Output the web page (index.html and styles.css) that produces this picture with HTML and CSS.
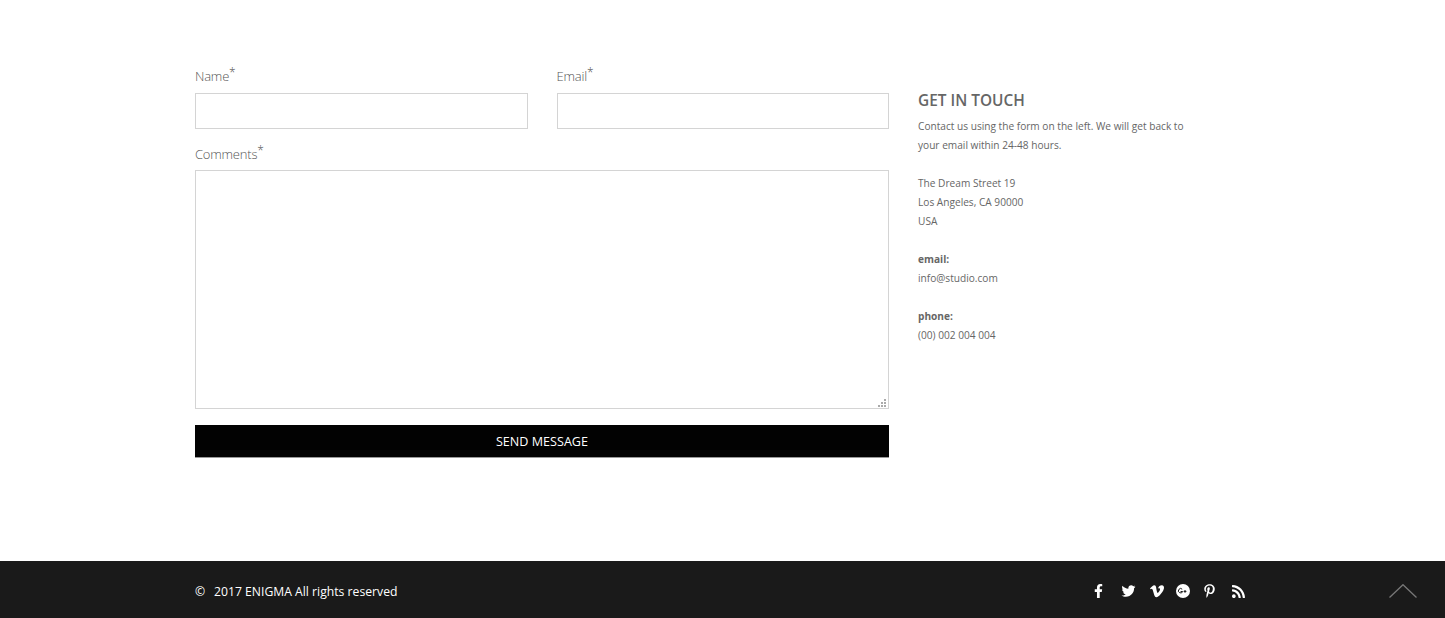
FILE: index.html
```html
<!DOCTYPE html>
<html lang="en">
<head>
<meta charset="utf-8">
<title>Contact</title>
<link rel="stylesheet" href="styles.css">
</head>
<body>
<main class="main">
  <form class="form">
    <div class="row">
      <div class="field">
        <label class="label" for="name">Name<sup class="req">*</sup></label>
        <input class="input" id="name" type="text">
      </div>
      <div class="field">
        <label class="label" for="email">Email<sup class="req">*</sup></label>
        <input class="input" id="email" type="text">
      </div>
    </div>
    <div class="field">
      <label class="label label-comments" for="comments">Comments<sup class="req">*</sup></label>
      <textarea class="textarea" id="comments"></textarea>
    </div>
    <button class="send" type="button">SEND MESSAGE</button>
  </form>
  <aside class="info">
    <h2 class="info-title">GET IN TOUCH</h2>
    <p class="info-text">Contact us using the form on the left. We will get back to<br>your email within 24-48 hours.</p>
    <p class="info-text">The Dream Street 19<br>Los Angeles, CA 90000<br>USA</p>
    <p class="info-text"><strong>email:</strong><br>info@studio.com</p>
    <p class="info-text"><strong>phone:</strong><br>(00) 002 004 004</p>
  </aside>
</main>
<footer class="footer">
  <div class="footer-inner">
    <p class="copy"><span class="copy-mark">©</span>2017 ENIGMA All rights reserved</p>
    <div class="social">
      <svg class="ic ic-f" viewBox="0 0 320 512"><path d="M279.14 288l14.22-92.66h-88.91v-60.13c0-25.35 12.42-50.06 52.24-50.06h40.42V6.26S260.43 0 225.36 0c-73.22 0-121.08 44.38-121.08 124.72v70.62H22.89V288h81.39v224h100.17V288z"/></svg>
      <svg class="ic ic-t" viewBox="0 0 512 512"><path d="M459.37 151.716c.325 4.548.325 9.097.325 13.645 0 138.72-105.583 298.558-298.558 298.558-59.452 0-114.68-17.219-161.137-47.106 8.447.974 16.568 1.299 25.34 1.299 49.055 0 94.213-16.568 130.274-44.832-46.132-.975-84.792-31.188-98.112-72.772 6.498.974 12.995 1.624 19.818 1.624 9.421 0 18.843-1.3 27.614-3.573-48.081-9.747-84.143-51.98-84.143-102.985v-1.299c13.969 7.797 30.214 12.67 47.431 13.319-28.264-18.843-46.781-51.005-46.781-87.391 0-19.492 5.197-37.36 14.294-52.954 51.655 63.675 129.3 105.258 216.365 109.807-1.624-7.797-2.599-15.918-2.599-24.04 0-57.828 46.782-104.934 104.934-104.934 30.213 0 57.502 12.67 76.67 33.137 23.715-4.548 46.456-13.32 66.599-25.34-7.798 24.366-24.366 44.833-46.132 57.827 21.117-2.273 41.584-8.122 60.426-16.243-14.292 20.791-32.161 39.308-52.628 54.253z"/></svg>
      <svg class="ic ic-v" viewBox="0 40 448 420"><path d="M447.8 153.6c-2 43.6-32.4 103.3-91.4 179.1-60.9 79.2-112.4 118.8-154.6 118.8-26.1 0-48.2-24.1-66.3-72.3C100.3 250 85.3 174.3 56.2 174.3c-3.4 0-15.1 7.1-35.2 21.1L0 168.2c51.6-45.3 100.9-95.7 131.8-98.5 34.9-3.4 56.3 20.5 64.4 71.5 28.7 181.5 41.4 208.9 93.6 126.7 18.7-29.6 28.8-52.1 30.2-67.6 4.8-45.9-35.8-42.8-63.3-31 22-72.1 64.1-107.1 126.2-105.1 45.8 1.2 67.5 31.1 64.9 89.4z"/></svg>
      <svg class="ic ic-g" viewBox="0 0 14 14"><circle cx="7" cy="7" r="7"/><path class="g-mark" d="M6.2 5.2A2.2 2.2 0 1 0 6.700 7.500H4.600M9 6v2.800M7.700 7.400h2.700"/></svg>
      <svg class="ic ic-p" viewBox="0 0 384 512"><path d="M204 6.5C101.4 6.5 0 74.9 0 185.6 0 256 39.6 296 63.6 296c9.9 0 15.6-27.6 15.6-35.4 0-9.3-23.7-29.1-23.7-67.8 0-80.4 61.2-137.4 140.4-137.4 68.1 0 118.5 38.7 118.5 109.8 0 53.1-21.3 152.7-90.3 152.7-24.9 0-46.2-18-46.2-43.8 0-37.8 26.4-74.4 26.4-113.4 0-66.2-93.9-54.2-93.9 25.8 0 16.8 2.1 35.4 9.6 50.7-13.8 59.4-42 147.9-42 209.1 0 18.9 2.7 37.5 4.5 56.4 3.4 3.8 1.7 3.4 6.9 1.5 50.4-69 48.6-82.5 71.4-172.8 12.3 23.4 44.1 36 69.3 36 106.2 0 153.9-103.5 153.9-196.8C384 71.3 298.2 6.5 204 6.5z"/></svg>
      <svg class="ic ic-r" viewBox="0 32 448 448"><path d="M128.081 415.959c0 35.369-28.672 64.041-64.041 64.041S0 451.328 0 415.959s28.672-64.041 64.041-64.041 64.04 28.673 64.04 64.041zm175.66 47.25c-8.354-154.6-132.185-278.587-286.95-286.95C7.656 175.765 0 183.105 0 192.253v48.069c0 8.415 6.49 15.472 14.887 16.018 111.832 7.284 201.473 96.702 208.772 208.772.547 8.397 7.604 14.887 16.018 14.887h48.069c9.149.001 16.489-7.655 15.995-16.79zm144.249.288C439.596 229.677 251.465 40.445 16.503 32.01 7.473 31.686 0 38.981 0 48.016v48.068c0 8.625 6.835 15.645 15.453 15.999 191.179 7.839 344.627 161.316 352.465 352.465.353 8.618 7.373 15.453 15.999 15.453h48.068c9.034-.001 16.329-7.474 16.005-16.504z"/></svg>
    </div>
  </div>
  <svg class="to-top" viewBox="0 0 28 14"><path d="M.5 13.500L14 .7l13.500 12.800"/></svg>
</footer>
</body>
</html>
```
FILE: styles.css
```css
* { box-sizing: border-box; }
html, body { margin: 0; padding: 0; }
body {
  background: #fff;
  font-family: "Open Sans", sans-serif;
  color: #666;
}
.main {
  display: flex;
  gap: 29px;
  height: 561px;
  padding: 65px 0 0 195px;
}
.form {
  width: 694px;
  flex: none;
  display: flex;
  flex-direction: column;
}
.row { display: flex; gap: 29px; }
.row .field { flex: 1; min-width: 0; }
.field { display: flex; flex-direction: column; }
.label {
  font-size: 13px;
  letter-spacing: -0.2px;
  font-weight: 300;
  line-height: 23px;
  height: 28px;
  color: #555;
}
.label-comments { padding-top: 1px; }
.req {
  font-size: 12px;
  line-height: 0;
  vertical-align: 4px;
}
.input {
  height: 36px;
  width: 100%;
  border: 1px solid #d4d4d4;
  background: #fff;
  margin-bottom: 13px;
  padding: 0 8px;
}
.textarea {
  display: block;
  width: 100%;
  height: 239px;
  border: 1px solid #d4d4d4;
  background: #fff;
  margin: 0 0 16px;
  padding: 8px;
}
.textarea::-webkit-resizer {
  background-color: #fff;
  background-image:
    linear-gradient(#aaa, #aaa), linear-gradient(#aaa, #aaa), linear-gradient(#aaa, #aaa),
    linear-gradient(#aaa, #aaa), linear-gradient(#aaa, #aaa), linear-gradient(#aaa, #aaa);
  background-size: 2px 2px;
  background-repeat: no-repeat;
  background-position: 11px 6px, 11px 9px, 8px 9px, 11px 12px, 8px 12px, 5px 12px;
}
.send {
  display: block;
  width: 100%;
  height: 33px;
  border: 0;
  border-bottom: 1px solid #999;
  background: #020202;
  color: #fff;
  font: 400 12.6px/30px "Open Sans", sans-serif;
  text-align: center;
  padding: 2px 0 0;
}
.info { width: 290px; padding-top: 25px; }
.info-title {
  margin: 0 0 5px;
  font-size: 15.4px;
  line-height: 22px;
  font-weight: 600;
  color: #666;
}
.info-text {
  margin: 0 0 19px;
  font-size: 10.15px;
  line-height: 19px;
  color: #666;
}
.info-text strong { font-weight: 700; }
.footer {
  position: relative;
  height: 57px;
  background: #1a1a1a;
}
.footer-inner {
  display: flex;
  align-items: center;
  height: 100%;
  padding: 0 200px 0 195px;
}
.copy {
  margin: 0;
  flex: 1;
  font-size: 12.2px;
  line-height: 20px;
  padding-top: 4px;
  color: #fff;
}
.copy-mark { display: inline-block; width: 19px; }
.social {
  display: flex;
  align-items: center;
  padding-top: 3px;
}
.ic { display: block; fill: #fff; height: 14px; }
.ic-f { width: 9px; margin-right: 18px; }
.ic-t { width: 15px; margin-right: 14px; }
.ic-v { width: 14px; margin-right: 12px; }
.ic-g { width: 14px; margin-right: 14px; }
.ic-p { width: 11px; margin-right: 17px; }
.ic-r { width: 13px; height: 13px; }
.g-mark { fill: none; stroke: #1a1a1a; stroke-width: 1; }
.to-top {
  position: absolute;
  right: 28px;
  top: 23px;
  width: 28px;
  height: 14px;
  fill: none;
  stroke: #777;
  stroke-width: 1.3;
}
```
